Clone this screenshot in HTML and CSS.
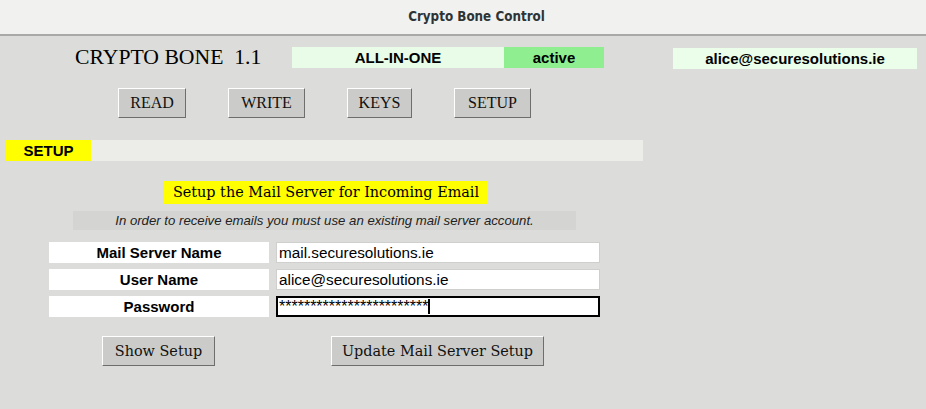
FILE: index.html
```html
<!DOCTYPE html>
<html lang="en">
<head>
    <meta charset="UTF-8">
    <title>Crypto Bone Control</title>
    <link rel="stylesheet" href="styles.css">
</head>
<body>
    <div class="titlebar">Crypto Bone Control</div>
    <div class="header">
        <div class="logo">CRYPTO BONE&nbsp; 1.1</div>
        <div class="mode">ALL-IN-ONE</div>
        <div class="state">active</div>
        <div class="account">alice@securesolutions.ie</div>
    </div>
    <div class="nav">
        <button class="btn nav-read">READ</button>
        <button class="btn nav-write">WRITE</button>
        <button class="btn nav-keys">KEYS</button>
        <button class="btn nav-setup">SETUP</button>
    </div>
    <div class="panel">
        <div class="section-bar">
            <div class="section-label">SETUP</div>
        </div>
        <div class="panel-title">Setup the Mail Server for Incoming Email</div>
        <div class="info">In order to receive emails you must use an existing mail server account.</div>
        <div class="form">
            <div class="form-row">
                <label class="form-label" for="server">Mail Server Name</label>
                <input class="form-input" id="server" type="text" value="mail.securesolutions.ie">
            </div>
            <div class="form-row">
                <label class="form-label" for="user">User Name</label>
                <input class="form-input" id="user" type="text" value="alice@securesolutions.ie">
            </div>
            <div class="form-row">
                <label class="form-label" for="pass">Password</label>
                <div class="form-input focused">************************<span class="caret"></span></div>
            </div>
        </div>
        <div class="actions">
            <button class="btn alt show-btn">Show Setup</button>
            <button class="btn alt update-btn">Update Mail Server Setup</button>
        </div>
    </div>
</body>
</html>
```

FILE: styles.css
```css
body {
    margin: 0;
    background-color: #dcdddb;
    font-family: 'Liberation Sans', Arial, sans-serif;
    color: #000;
}
.titlebar {
    height: 34px;
    line-height: 34px;
    padding-left: 27px;
    text-align: center;
    background-color: #f1f2f0;
    border-bottom: 2px solid #a9aaa7;
    font-family: 'DejaVu Sans Condensed', 'DejaVu Sans', sans-serif;
    font-size: 13.3px;
    font-weight: bold;
    color: #2e3436;
}
.header {
    display: flex;
    align-items: center;
    height: 21px;
    margin-top: 11px;
    padding-left: 75px;
}
.logo {
    width: 217px;
    font-family: 'Liberation Serif', 'Times New Roman', serif;
    font-size: 21.7px;
    white-space: nowrap;
}
.mode, .state, .account {
    height: 21px;
    line-height: 21px;
    text-align: center;
    font-weight: bold;
    font-size: 15px;
}
.mode {
    width: 212px;
    background-color: #e8fce8;
}
.state {
    width: 100px;
    background-color: #8eee90;
}
.account {
    width: 244px;
    margin-left: 69px;
    margin-top: 2px;
    background-color: #eafeea;
}
.btn {
    height: 30px;
    padding: 0;
    background-color: #cbccc9;
    border: 1px solid;
    border-color: #ffffff #6e6f6d #6e6f6d #ffffff;
    border-radius: 0;
    font-family: 'Liberation Serif', 'Times New Roman', serif;
    font-size: 16px;
    color: #111;
}
.btn.alt {
    font-family: 'DejaVu Serif', 'Liberation Serif', serif;
    font-size: 14.4px;
}
.nav {
    display: flex;
    gap: 42px;
    margin-top: 20px;
    padding-left: 118px;
}
.nav-read { width: 68px; }
.nav-write { width: 77px; }
.nav-keys { width: 65px; }
.nav-setup { width: 77px; }
.panel {
    width: 637px;
    margin-left: 6px;
    margin-top: 22px;
    display: flex;
    flex-direction: column;
    align-items: center;
}
.section-bar {
    align-self: stretch;
    height: 21px;
    background-color: #ecede8;
}
.section-label {
    width: 85px;
    height: 21px;
    line-height: 21px;
    background-color: #ffff00;
    text-align: center;
    font-weight: bold;
    font-size: 15px;
}
.panel-title {
    margin-top: 20px;
    width: 324px;
    height: 23px;
    line-height: 23px;
    background-color: #ffff00;
    text-align: center;
    font-family: 'DejaVu Serif', 'Liberation Serif', serif;
    font-size: 14.4px;
    margin-left: 3px;
}
.info {
    margin-top: 7px;
    width: 503px;
    height: 19px;
    line-height: 19px;
    background-color: #d4d5d2;
    text-align: center;
    font-style: italic;
    font-size: 13.2px;
    color: #222;
}
.form {
    margin-top: 12px;
    display: flex;
    flex-direction: column;
    gap: 6px;
}
.form-row {
    display: flex;
    gap: 7px;
}
.form-label {
    width: 220px;
    height: 21px;
    line-height: 21px;
    background-color: #ffffff;
    text-align: center;
    font-weight: bold;
    font-size: 15px;
}
.form-input {
    box-sizing: border-box;
    width: 324px;
    height: 21px;
    margin: 0;
    padding: 0 2px;
    border: 1px solid #cfd0cd;
    background-color: #ffffff;
    font-family: 'Liberation Sans', Arial, sans-serif;
    font-size: 15.3px;
    line-height: 19px;
    color: #000;
    outline: none;
}
.form-input.focused {
    border: 2px solid #000;
    padding: 0 1px;
    line-height: 17px;
    font-size: 16px;
    display: flex;
    align-items: center;
}
.caret {
    display: inline-block;
    width: 2px;
    height: 15px;
    background-color: #000;
}
.actions {
    align-self: stretch;
    display: flex;
    margin-top: 19px;
    padding-left: 96px;
    gap: 116px;
}
.show-btn {
    width: 113px;
}
.update-btn {
    width: 213px;
}
```
